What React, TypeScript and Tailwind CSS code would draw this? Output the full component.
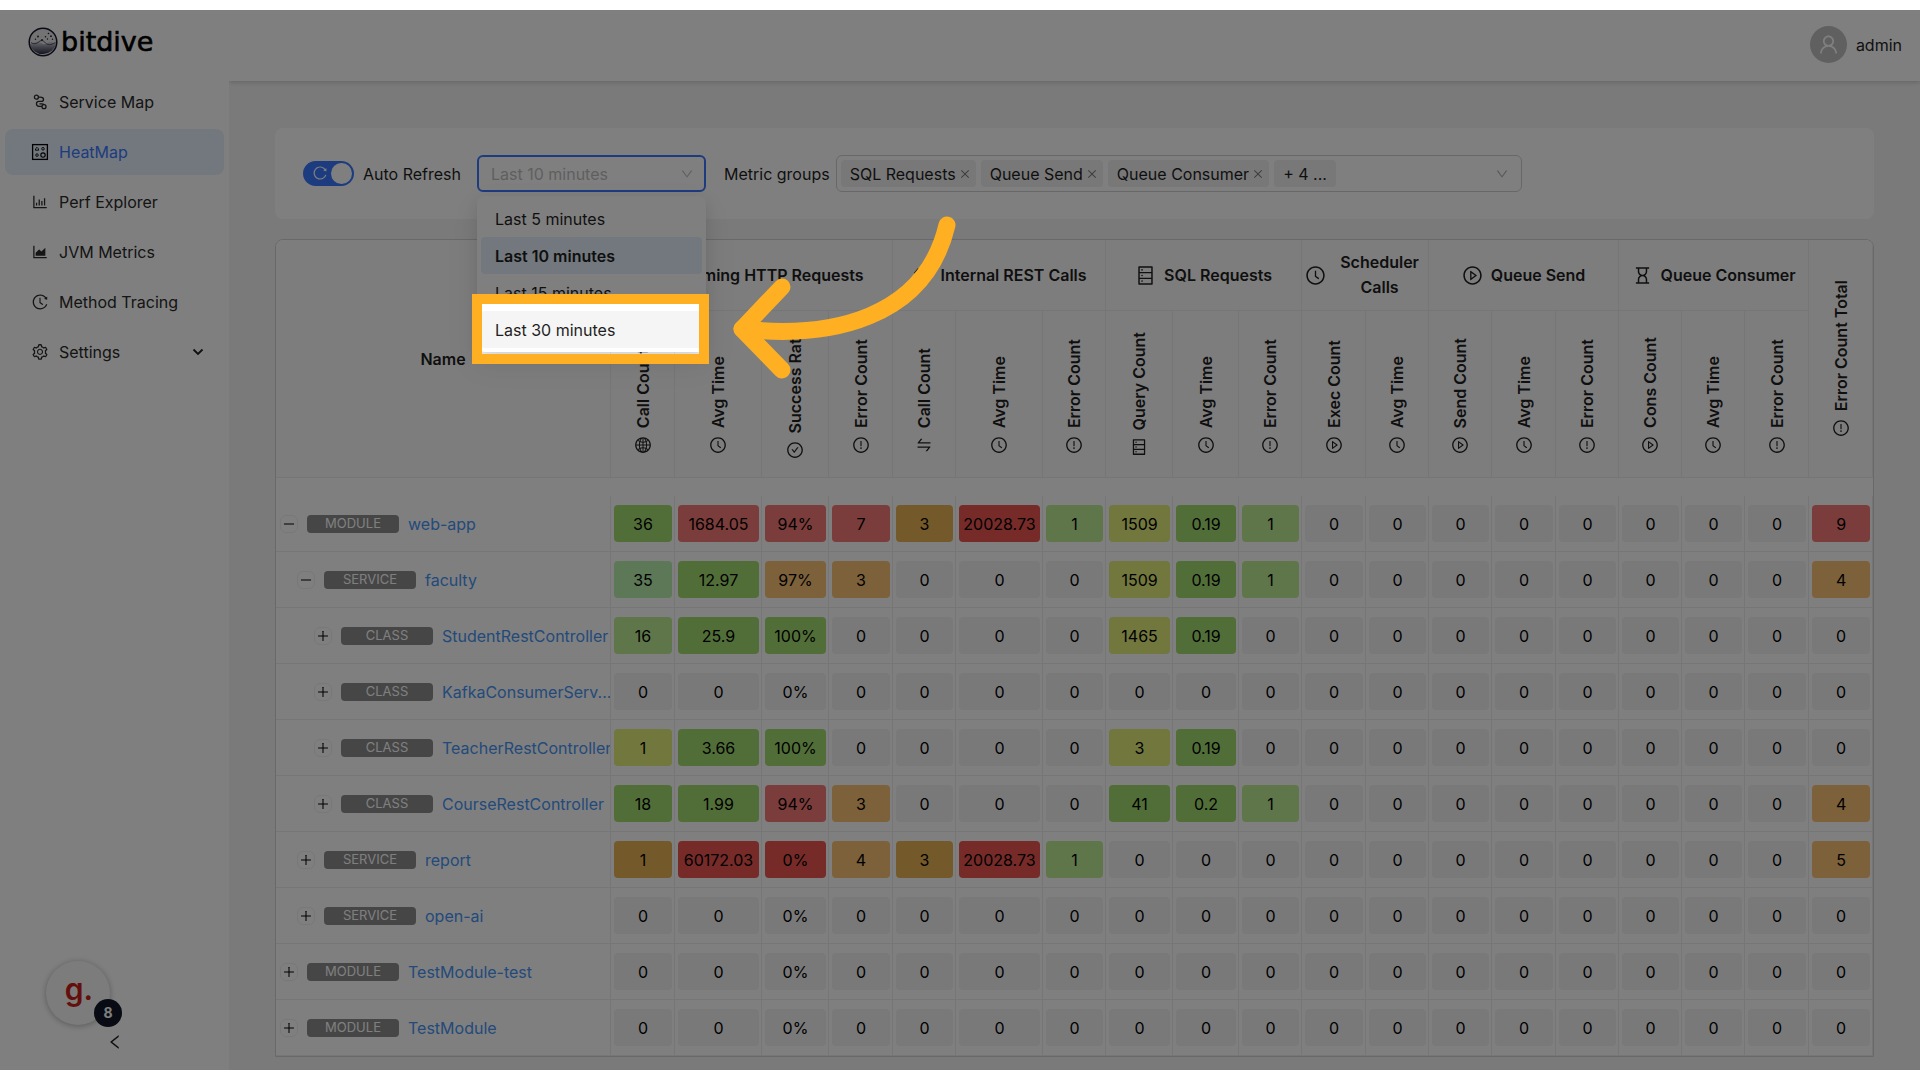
import { useState } from "react";
import type { ComponentType, ReactNode } from "react";
import {
  AiOutlineAreaChart,
  AiOutlineBarChart,
  AiOutlineCheckCircle,
  AiOutlineClockCircle,
  AiOutlineClose,
  AiOutlineDatabase,
  AiOutlineDown,
  AiOutlineExclamationCircle,
  AiOutlineGlobal,
  AiOutlineHistory,
  AiOutlineHourglass,
  AiOutlineLeft,
  AiOutlineMinus,
  AiOutlinePlayCircle,
  AiOutlinePlus,
  AiOutlineReload,
  AiOutlineSetting,
  AiOutlineSwap,
  AiOutlineUser,
} from "react-icons/ai";

type Icon = ComponentType<{ className?: string }>;

function ServiceMapIcon({ className }: { className?: string }) {
  return (
    <svg viewBox="-1 -1 18 18" className={className} fill="none" stroke="currentColor" strokeWidth="1.3" aria-hidden="true">
      <circle cx="4.4" cy="3.2" r="2" />
      <path d="M6.5 3.2h1.8c2.2 0 3.2 1 3.2 2.2 0 1.1-.9 2-2.3 2H6.9a2.4 2.4 0 0 0 0 4.9h2.9M7.4 9.9h2.4c1.2 0 1.8.3 2.1.8" />
      <circle cx="12" cy="12.7" r="2" />
    </svg>
  );
}

function HeatMapIcon({ className }: { className?: string }) {
  return (
    <svg viewBox="-1 -1 18 18" className={className} fill="none" stroke="#000" aria-hidden="true">
      <rect x="0.6" y="0.6" width="14.8" height="14.8" strokeWidth="1.3" />
      <path d="M3.4 6.2h3.2L6.3 4.6 5 3.3 3.7 4.6z" strokeWidth="0.9" />
      <circle cx="11" cy="4.8" r="1.3" strokeWidth="0.9" />
      <circle cx="5" cy="11.1" r="1.3" strokeWidth="0.9" />
      <circle cx="11" cy="11.1" r="2.2" strokeWidth="1.1" />
    </svg>
  );
}

function LogoMark() {
  return (
    <svg viewBox="0 0 30 30" className="size-[30px]" aria-hidden="true">
      <defs>
        <linearGradient id="sea" x1="0" y1="0" x2="0" y2="1">
          <stop offset="0" stopColor="#d2d2d6" />
          <stop offset="0.4" stopColor="#8c8c9c" />
          <stop offset="1" stopColor="#2c2d46" />
        </linearGradient>
      </defs>
      <circle cx="15" cy="15" r="13.8" fill="#e6e6e6" />
      <path d="M1.6 17c4-.4 5-2.3 8-2.3s4.5 2.6 7 2.4 3-2 5.5-2 4 1.2 6.3 1A13.8 13.8 0 0 1 1.6 17z" fill="url(#sea)" />
      <path d="M3 15.5c3 2 5 1.5 8-.8s4.5-.8 6.5 1.3 5 2.5 10-.6" fill="none" stroke="#34344c" strokeWidth="0.8" />
      <circle cx="15" cy="15" r="13.8" fill="none" stroke="#16162e" strokeWidth="1.5" />
      <g fill="#1c1c30">
        <circle cx="10" cy="9.5" r="0.9" />
        <circle cx="7.5" cy="12.3" r="0.7" />
        <circle cx="14" cy="13" r="0.9" />
        <circle cx="17.5" cy="9.8" r="0.8" />
        <circle cx="20.5" cy="6.5" r="0.8" />
        <circle cx="23" cy="9.2" r="0.9" />
        <circle cx="19.5" cy="12" r="0.7" />
        <circle cx="24.5" cy="12.2" r="0.7" />
      </g>
    </svg>
  );
}

const navItems: { label: string; icon: Icon; active?: boolean; more?: boolean }[] = [
  { label: "Service Map", icon: ServiceMapIcon },
  { label: "HeatMap", icon: HeatMapIcon, active: true },
  { label: "Perf Explorer", icon: AiOutlineBarChart },
  { label: "JVM Metrics", icon: AiOutlineAreaChart },
  { label: "Method Tracing", icon: AiOutlineHistory },
  { label: "Settings", icon: AiOutlineSetting, more: true },
];

function Sidebar() {
  return (
    <aside className="relative flex w-[229px] shrink-0 flex-col bg-white">
      <div className="flex h-16 items-center gap-[3px] pl-[28px]">
        <LogoMark />
        <span className="pb-0.5 font-['DejaVu_Sans'] text-[27px] leading-none text-black [-webkit-text-stroke:0.6px_#000]">bitdive</span>
      </div>
      <nav className="flex flex-col gap-1 px-[5px] pt-[5px]">
        {navItems.map(({ label, icon: ItemIcon, active, more }) => (
          <a
            key={label}
            href={"#" + label.toLowerCase().replace(" ", "-")}
            aria-current={active ? "page" : undefined}
            className={
              active
                ? "flex h-[46px] items-center rounded-lg bg-[#e4f1fa] pl-[26px] pr-5 text-[#3b78ff]"
                : "flex h-[46px] items-center rounded-lg pl-[26px] pr-5 text-[#2a2a2a]"
            }
          >
            <ItemIcon className="size-[18px]" />
            <span className="ml-[10px] flex-1">{label}</span>
            {more && (
              <svg viewBox="0 0 12 12" className="size-3" fill="none" stroke="#1f1f1f" strokeWidth="1.8" aria-hidden="true">
                <path d="M1.5 3.5 6 8l4.5-4.5" />
              </svg>
            )}
          </a>
        ))}
      </nav>
      <button type="button" aria-label="Collapse menu" className="mt-auto flex h-14 items-center justify-center text-[#1f1f1f]">
        <AiOutlineLeft className="size-[18px]" />
      </button>
      <button
        type="button"
        aria-label="Open guide, 8 notices"
        className="absolute bottom-[45px] left-[46px] flex size-16 items-center justify-center rounded-full bg-[#f8f8f8] shadow-[0_1px_6px_rgba(0,0,0,0.3)]"
      >
        <span className="pb-2 pl-0.5 text-[30px] font-semibold leading-none text-[#c81e16]">g.</span>
        <span className="absolute -bottom-[2px] -right-[12px] flex size-7 items-center justify-center rounded-full bg-[#101626] text-sm font-bold text-white">
          8
        </span>
      </button>
    </aside>
  );
}

const ranges = ["Last 5 minutes", "Last 10 minutes", "Last 15 minutes", "Last 30 minutes"];

function Spotlight() {
  return (
    <div className="pointer-events-none absolute -left-[9px] -top-[17px] z-30 h-[70px] w-[237px]" aria-hidden="true">
      <div className="size-full border-[10px] border-[#ffaf22] shadow-[0_0_0_2400px_rgba(0,0,0,0.5)]" />
      <svg
        viewBox="0 0 240 170"
        className="absolute -top-[83px] left-[254px] h-[170px] w-[240px]"
        fill="none"
        stroke="#ffaf22"
        strokeWidth="17"
        strokeLinecap="round"
        strokeLinejoin="round"
      >
        <path d="M56 76 16 118l40 41" />
        <path d="M16 118C104 128 199 108 221 14" />
      </svg>
    </div>
  );
}

function RangeSelect() {
  const [range, setRange] = useState("Last 10 minutes");
  return (
    <div className="relative w-[229px]">
      <select
        aria-label="Refresh range"
        value={range}
        onChange={(e) => setRange(e.target.value)}
        className="h-[37px] w-full appearance-none rounded-md border-2 border-[#3b78ff] bg-white pl-3 text-[#bfbfbf] outline-none"
      >
        {ranges.map((r) => (
          <option key={r}>{r}</option>
        ))}
      </select>
      <AiOutlineDown className="pointer-events-none absolute right-[12px] top-[12px] size-[14px] text-[#bfbfbf]" />
      <ul className="absolute left-0 top-[41px] z-20 w-full rounded-lg bg-white p-1 shadow-[0_6px_16px_rgba(0,0,0,0.08),0_3px_6px_-4px_rgba(0,0,0,0.12),0_9px_28px_8px_rgba(0,0,0,0.05)]">
        {ranges.map((r, i) => (
          <li key={r} className="relative">
            <button
              type="button"
              onClick={() => setRange(r)}
              className={
                r === range
                  ? "h-[37px] w-full rounded bg-[#e4f1fa] px-[14px] text-left font-semibold"
                  : i === 3
                    ? "h-[37px] w-full rounded bg-[#f5f5f5] px-[14px] text-left"
                    : "h-[37px] w-full rounded px-[14px] text-left"
              }
            >
              {r}
            </button>
            {i === 3 && <Spotlight />}
          </li>
        ))}
      </ul>
    </div>
  );
}

function FilterBar() {
  return (
    <section className="flex h-[91px] items-center rounded-lg bg-white pl-[28px]">
      <label className="flex items-center gap-[9px]">
        <span className="relative flex">
          <input type="checkbox" role="switch" defaultChecked className="h-[25px] w-[51px] appearance-none rounded-full bg-[#3b78ff]" />
          <AiOutlineReload className="pointer-events-none absolute left-[9px] top-[4px] size-4 text-white" />
          <span className="pointer-events-none absolute right-[2px] top-[2px] size-[21px] rounded-full bg-white" />
        </span>
        Auto Refresh
      </label>
      <div className="ml-4">
        <RangeSelect />
      </div>
      <span className="ml-[18px]" id="groups-label">
        Metric groups
      </span>
      <div
        role="group"
        aria-labelledby="groups-label"
        className="ml-[6px] flex h-[37px] w-[686px] items-center gap-[5px] rounded-md border border-[#d0d0d0] pl-1 pr-3"
      >
        {["SQL Requests", "Queue Send", "Queue Consumer"].map((tag) => (
          <span key={tag} className="flex h-[27px] items-center gap-[3px] rounded bg-[#f0f0f0] pl-[9px] pr-[5px]">
            {tag}
            <button type="button" aria-label={"Remove " + tag} className="text-[#7a7a7a]">
              <AiOutlineClose className="size-3" />
            </button>
          </span>
        ))}
        <span className="flex h-[27px] items-center rounded bg-[#f0f0f0] px-[9px]">+ 4 ...</span>
        <button type="button" aria-label="Show metric groups" className="ml-auto text-[#b0b0b0]">
          <AiOutlineDown className="size-[14px]" />
        </button>
      </div>
    </section>
  );
}

const groups: { title: string; icon: Icon; span: number }[] = [
  { title: "Incoming HTTP Requests", icon: AiOutlineGlobal, span: 4 },
  { title: "Internal REST Calls", icon: AiOutlineSwap, span: 3 },
  { title: "SQL Requests", icon: AiOutlineDatabase, span: 3 },
  { title: "Scheduler Calls", icon: AiOutlineClockCircle, span: 2 },
  { title: "Queue Send", icon: AiOutlinePlayCircle, span: 3 },
  { title: "Queue Consumer", icon: AiOutlineHourglass, span: 3 },
];

const metrics: [string, Icon][] = [
  ["Call Count", AiOutlineGlobal],
  ["Avg Time", AiOutlineClockCircle],
  ["Success Rate", AiOutlineCheckCircle],
  ["Error Count", AiOutlineExclamationCircle],
  ["Call Count", AiOutlineSwap],
  ["Avg Time", AiOutlineClockCircle],
  ["Error Count", AiOutlineExclamationCircle],
  ["Query Count", AiOutlineDatabase],
  ["Avg Time", AiOutlineClockCircle],
  ["Error Count", AiOutlineExclamationCircle],
  ["Exec Count", AiOutlinePlayCircle],
  ["Avg Time", AiOutlineClockCircle],
  ["Send Count", AiOutlinePlayCircle],
  ["Avg Time", AiOutlineClockCircle],
  ["Error Count", AiOutlineExclamationCircle],
  ["Cons Count", AiOutlinePlayCircle],
  ["Avg Time", AiOutlineClockCircle],
  ["Error Count", AiOutlineExclamationCircle],
];

const columnWidths = [335, 64, 87, 67, 64, 63, 87, 63, 67, 66, 63, 64, 63, 63, 64, 63, 63, 63, 64, 64];

const heat: Record<string, string> = {
  G: "bg-[#a4dc70]",
  g: "bg-[#bfec94]",
  p: "bg-[#b8f0ae]",
  y: "bg-[#e4ee7c]",
  o: "bg-[#fac276]",
  d: "bg-[#e8b454]",
  r: "bg-[#f47a76]",
  R: "bg-[#ee5652]",
  z: "bg-[#f3f3f3]",
};

type Row = { kind: string; name: string; depth: number; open?: boolean; values: string; tones: string };

const rows: Row[] = [
  { kind: "MODULE", name: "web-app", depth: 0, open: true, values: "36 1684.05 94% 7 3 20028.73 1 1509 0.19 1 0 0 0 0 0 0 0 0 9", tones: "GrrrdRgyGgzzzzzzzzr" },
  { kind: "SERVICE", name: "faculty", depth: 1, open: true, values: "35 12.97 97% 3 0 0 0 1509 0.19 1 0 0 0 0 0 0 0 0 4", tones: "pGoozzzyGgzzzzzzzzo" },
  { kind: "CLASS", name: "StudentRestController", depth: 2, values: "16 25.9 100% 0 0 0 0 1465 0.19 0 0 0 0 0 0 0 0 0 0", tones: "gGGzzzzyGzzzzzzzzzz" },
  { kind: "CLASS", name: "KafkaConsumerServ...", depth: 2, values: "0 0 0% 0 0 0 0 0 0 0 0 0 0 0 0 0 0 0 0", tones: "zzzzzzzzzzzzzzzzzzz" },
  { kind: "CLASS", name: "TeacherRestController", depth: 2, values: "1 3.66 100% 0 0 0 0 3 0.19 0 0 0 0 0 0 0 0 0 0", tones: "yGGzzzzyGzzzzzzzzzz" },
  { kind: "CLASS", name: "CourseRestController", depth: 2, values: "18 1.99 94% 3 0 0 0 41 0.2 1 0 0 0 0 0 0 0 0 4", tones: "GGrozzzGGgzzzzzzzzo" },
  { kind: "SERVICE", name: "report", depth: 1, values: "1 60172.03 0% 4 3 20028.73 1 0 0 0 0 0 0 0 0 0 0 0 5", tones: "dRRodRgzzzzzzzzzzzo" },
  { kind: "SERVICE", name: "open-ai", depth: 1, values: "0 0 0% 0 0 0 0 0 0 0 0 0 0 0 0 0 0 0 0", tones: "zzzzzzzzzzzzzzzzzzz" },
  { kind: "MODULE", name: "TestModule-test", depth: 0, values: "0 0 0% 0 0 0 0 0 0 0 0 0 0 0 0 0 0 0 0", tones: "zzzzzzzzzzzzzzzzzzz" },
  { kind: "MODULE", name: "TestModule", depth: 0, values: "0 0 0% 0 0 0 0 0 0 0 0 0 0 0 0 0 0 0 0", tones: "zzzzzzzzzzzzzzzzzzz" },
];

const indents = ["pl-1", "pl-[21px]", "pl-[38px]"];

function VerticalTitle({ icon: TitleIcon, children }: { icon: Icon; children: ReactNode }) {
  return (
    <div className="flex min-h-[120px] flex-col items-center justify-end gap-2">
      <span className="rotate-180 whitespace-nowrap [writing-mode:vertical-rl]">{children}</span>
      <TitleIcon className="size-[18px] shrink-0" />
    </div>
  );
}

function HeatTable() {
  return (
    <div className="mt-5 overflow-hidden rounded-t-lg border border-[#d2d2d2] bg-white">
      <table className="w-full table-fixed border-separate border-spacing-0">
        <colgroup>
          {columnWidths.map((w, i) => (
            <col key={i} style={{ width: w }} />
          ))}
        </colgroup>
        <thead className="bg-[#fafafa]">
          <tr className="h-[71px]">
            <th rowSpan={2} scope="col" className="border-b border-r border-[#ededed] font-semibold">
              Name
            </th>
            {groups.map(({ title, icon: GroupIcon, span }) => (
              <th key={title} colSpan={span} scope="colgroup" className="border-b border-r border-[#ededed] px-[3px] py-0 font-semibold leading-[25px]">
                <div className="flex items-center justify-center gap-2">
                  <GroupIcon className="size-[21px] shrink-0" />
                  <span>{title}</span>
                </div>
              </th>
            ))}
            <th rowSpan={2} scope="col" className="border-b border-r border-[#ededed] p-0 font-semibold">
              <VerticalTitle icon={AiOutlineExclamationCircle}>Error Count Total</VerticalTitle>
            </th>
          </tr>
          <tr className="h-[167px]">
            {metrics.map(([title, icon], i) => (
              <th key={i} scope="col" className="border-b border-r border-[#ededed] p-0 font-semibold">
                <VerticalTitle icon={icon}>{title}</VerticalTitle>
              </th>
            ))}
          </tr>
        </thead>
        <tbody>
          <tr className="h-[18px]">
            <td colSpan={20} className="p-0" />
          </tr>
          {rows.map((row) => (
            <tr key={row.name} className="h-14">
              <td className={"overflow-hidden border-b border-r border-[#ececec] py-0 pr-0 " + indents[row.depth]}>
                <div className="flex items-center">
                  <button
                    type="button"
                    aria-label={(row.open ? "Collapse " : "Expand ") + row.name}
                    className="flex h-[18px] w-[18px] shrink-0 items-center justify-center rounded-md border border-[#f0f0f0] text-black"
                  >
                    {row.open ? <AiOutlineMinus className="size-[14px]" /> : <AiOutlinePlus className="size-[14px]" />}
                  </button>
                  <span className="ml-[9px] flex h-[18px] w-[92px] shrink-0 items-center justify-center rounded bg-[#8c8c8c] text-[13px] text-white">
                    {row.kind}
                  </span>
                  <a href={"#" + row.name} className="ml-[9px] whitespace-nowrap text-[#4794f4]">
                    {row.name}
                  </a>
                </div>
              </td>
              {row.values.split(" ").map((value, i) => (
                <td key={i} className="border-b border-r border-[#ececec] py-0 pl-[3px] pr-[2px]">
                  <div className={"flex h-[37px] items-center justify-center rounded text-black " + heat[row.tones[i]]}>{value}</div>
                </td>
              ))}
            </tr>
          ))}
        </tbody>
      </table>
    </div>
  );
}

export default function App() {
  return (
    <div className="min-h-screen bg-white py-[10px] font-['Inter',sans-serif] text-base leading-normal text-[#1f1f1f]">
      <div className="relative flex overflow-hidden">
        <Sidebar />
        <div className="flex min-w-0 flex-1 flex-col bg-[#f5f5f5]">
          <header className="flex h-[71px] items-center justify-end bg-white pb-0.5 pr-[18px] shadow-[0_1px_5px_rgba(0,0,0,0.2)]">
            <button type="button" className="flex items-center gap-[9px]">
              <span className="flex size-[37px] items-center justify-center rounded-full bg-[#c0c0c0] text-white">
                <AiOutlineUser className="size-[23px]" />
              </span>
              admin
            </button>
          </header>
          <main className="px-[46px] pb-[13px] pt-[47px]">
            <FilterBar />
            <HeatTable />
          </main>
        </div>
      </div>
    </div>
  );
}
